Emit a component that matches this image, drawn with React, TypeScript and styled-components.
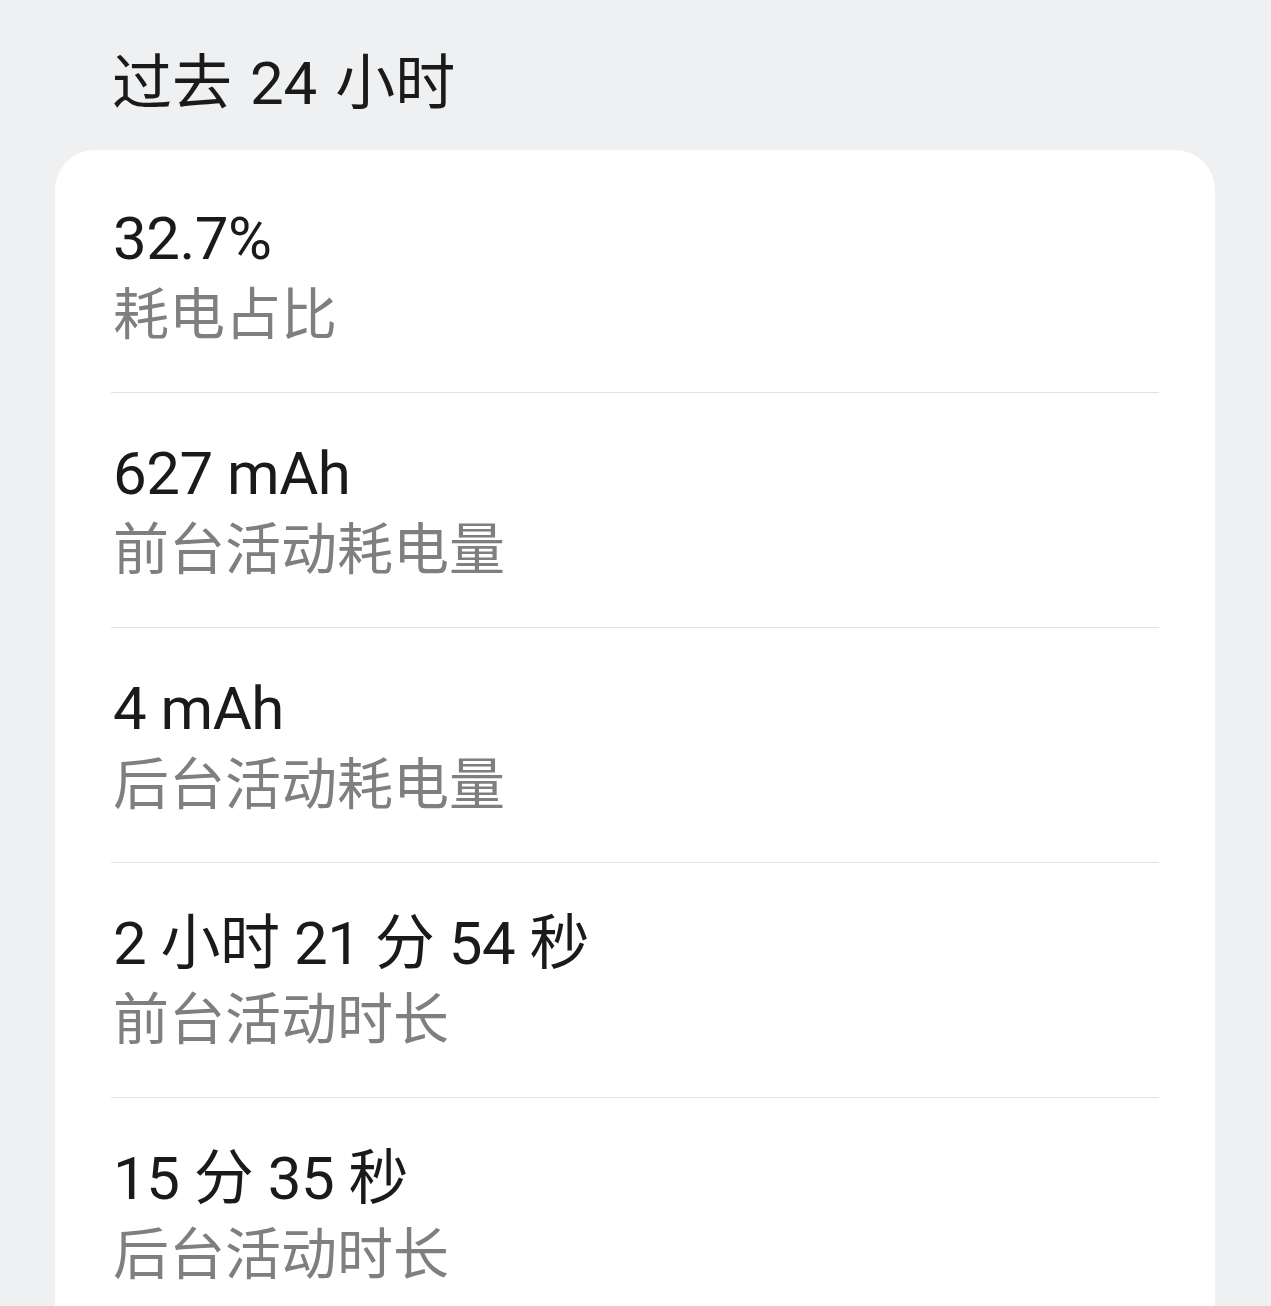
import React from 'react';
import styled, { createGlobalStyle } from 'styled-components';

const GlobalStyle = createGlobalStyle`
  html, body {
    margin: 0;
    padding: 0;
    background: #eff0f2;
  }
  body {
    font-family: Roboto, "Noto Sans CJK SC", sans-serif;
    overflow: hidden;
  }
`;

const stats = [
  { value: '32.7%', label: '耗电占比' },
  { value: '627 mAh', label: '前台活动耗电量' },
  { value: '4 mAh', label: '后台活动耗电量' },
  { value: '2 小时 21 分 54 秒', label: '前台活动时长' },
  { value: '15 分 35 秒', label: '后台活动时长' },
];

const App: React.FC = () => {
  return (
    <Page>
      <GlobalStyle />
      <Title>过去 24 小时</Title>
      <Card>
        {stats.map((s, i) => (
          <Row key={s.label + i} $last={i === stats.length - 1}>
            <Value>{s.value}</Value>
            <Label>{s.label}</Label>
          </Row>
        ))}
      </Card>
    </Page>
  );
};

const Page = styled.div`
  width: 1271px;
  height: 1306px;
  padding: 0 56px 0 55px;
  box-sizing: border-box;
  overflow: hidden;
`;

const Title = styled.h1`
  margin: 0;
  padding: 46px 0 28px 57px;
  font-size: 60px;
  line-height: 76px;
  font-weight: 400;
  color: #1a1a1a;
  word-spacing: 3px;
`;

const Card = styled.div`
  background: #ffffff;
  border-radius: 40px;
  padding: 8px 56px 40px;
`;

const Row = styled.div<{ $last: boolean }>`
  display: flex;
  flex-direction: column;
  padding: 43px 0 39px 2px;
  border-bottom: ${(p) => (p.$last ? 'none' : '1px solid #e1e2e4')};
`;

const Value = styled.div`
  font-size: 60px;
  line-height: 76px;
  color: #1a1a1a;
  letter-spacing: -0.5px;
`;

const Label = styled.div`
  font-size: 56px;
  line-height: 76px;
  color: #7f7f7f;
`;

export default App;
